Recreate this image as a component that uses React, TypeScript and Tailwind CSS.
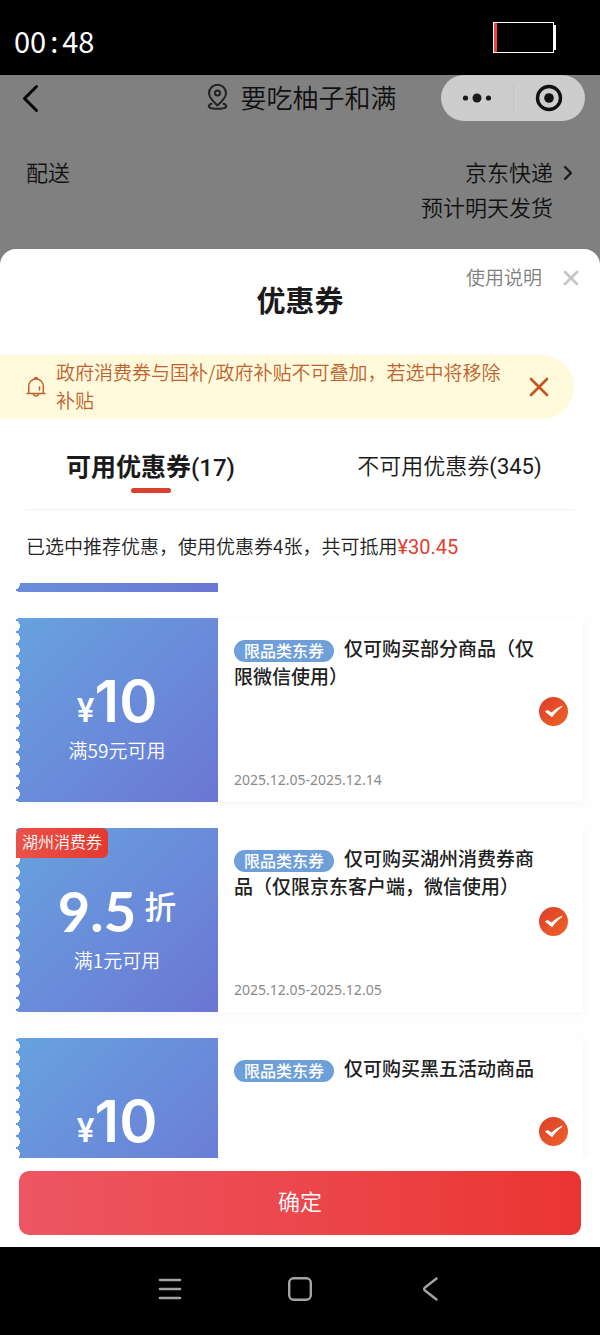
import { useState } from "react";

type Coupon = {
  id: string;
  amount: string;
  kind: "cash" | "discount";
  condition?: string;
  title: string;
  period?: string;
  tag?: string;
};

const coupons: Coupon[] = [
  {
    id: "wechat",
    amount: "10",
    kind: "cash",
    condition: "满59元可用",
    title: "仅可购买部分商品（仅限微信使用）",
    period: "2025.12.05-2025.12.14",
  },
  {
    id: "huzhou",
    amount: "9.5",
    kind: "discount",
    condition: "满1元可用",
    title: "仅可购买湖州消费券商品（仅限京东客户端，微信使用）",
    period: "2025.12.05-2025.12.05",
    tag: "湖州消费券",
  },
  {
    id: "friday",
    amount: "10",
    kind: "cash",
    title: "仅可购买黑五活动商品",
  },
];

function StatusBar() {
  return (
    <div className="flex h-[75px] shrink-0 items-center justify-between bg-black pr-11 pl-[14px] text-white">
      <div className="flex pt-1 text-[29px] leading-9 font-normal">
        <span>00</span>
        <span className="w-4 text-center">:</span>
        <span>48</span>
      </div>
      <svg width="63" height="31" viewBox="0 0 63 31" aria-hidden="true">
        <rect x="0.5" y="0.5" width="60" height="30" fill="none" stroke="#fff" />
        <rect x="1" y="1" width="3" height="29" fill="#ef4538" />
        <rect x="61" y="3" width="2" height="25" fill="#fff" />
      </svg>
    </div>
  );
}

function PageHeader() {
  return (
    <header className="grid h-[46px] shrink-0 grid-cols-[1fr_auto_1fr] items-center pl-1 text-[#101010]">
      <button aria-label="返回" className="ml-4 justify-self-start">
        <svg width="22" height="30" viewBox="0 0 22 30" fill="none">
          <path d="M16.5 3.5 4.5 15.5l12 12" stroke="#050505" strokeWidth="3" strokeLinecap="round" strokeLinejoin="round" />
        </svg>
      </button>
      <h1 className="flex items-center gap-3 pb-[2px] text-[26px] leading-9">
        <svg width="21" height="26" viewBox="0 0 21 26" fill="none" stroke="#222" strokeWidth="2" strokeLinecap="round">
          <path d="M10.5 21.5C6 17.5 2 13.5 2 9.3a8.500 8.500 0 0 1 17 0c0 4.200-4 8.200-8.500 12.200Z" strokeLinejoin="round" />
          <circle cx="10.500" cy="9" r="2.500" />
          <path d="M4.500 19.800c-5 1.800-3.500 5 6 5s11-3.200 6-5" />
        </svg>
        要吃柚子和满
      </h1>
      <div className="mr-[15px] flex h-[46px] w-36 items-center justify-self-end rounded-full bg-[#cdcdcd]">
        <button aria-label="更多" className="flex h-full flex-1 items-center justify-center">
          <svg width="30" height="10" viewBox="0 0 30 10" fill="#1b1b1b">
            <circle cx="3.500" cy="5" r="2.600" />
            <circle cx="15" cy="5" r="4.500" />
            <circle cx="26.500" cy="5" r="2.600" />
          </svg>
        </button>
        <span className="h-7 w-px bg-[#c3c3c3]" />
        <button aria-label="关闭" className="flex h-full flex-1 items-center justify-center">
          <svg width="28" height="28" viewBox="0 0 28 28" fill="none">
            <circle cx="14" cy="14" r="11.500" stroke="#111" strokeWidth="3.400" />
            <circle cx="14" cy="14" r="4.800" fill="#111" />
          </svg>
        </button>
      </div>
    </header>
  );
}

function Delivery() {
  return (
    <section className="flex shrink-0 justify-between px-[26px] pt-[33px] pb-[25px] text-[22px] leading-[35px] text-[#101010]">
      <span>配送</span>
      <div className="flex">
        <div className="text-right">
          <p>京东快递</p>
          <p>预计明天发货</p>
        </div>
        <svg className="mt-[11px] ml-2" width="13" height="16" viewBox="0 0 13 16" fill="none">
          <path d="m4 2 6 6-6 6" stroke="#1c1c1c" strokeWidth="2.4" strokeLinecap="round" strokeLinejoin="round" />
        </svg>
      </div>
    </section>
  );
}

function SheetHeader() {
  return (
    <div className="grid h-[106px] shrink-0 grid-cols-[1fr_auto_1fr] items-start">
      <h2 className="col-start-2 pt-[30px] text-[29px] leading-10 font-bold text-[#1a1a1a]">优惠券</h2>
      <div className="flex items-center gap-5 justify-self-end pt-4 pr-5">
        <a href="#help" className="text-[19px] leading-6 text-[#808080]">
          使用说明
        </a>
        <button aria-label="关闭优惠券" className="pt-[2px]">
          <svg width="18" height="18" viewBox="0 0 18 18" stroke="#c6c6c6" strokeWidth="2.800" strokeLinecap="round">
            <path d="m3 3 12 12M15 3 3 15" />
          </svg>
        </button>
      </div>
    </div>
  );
}

function Notice({ onClose }: { onClose: () => void }) {
  return (
    <div className="mr-[26px] flex shrink-0 items-center rounded-r-full bg-[#fefadb] pt-[3px] pb-[5px] pr-6 pl-[26px] text-[#c0622f]">
      <svg className="shrink-0" width="20" height="22" viewBox="0 0 20 22" fill="none" stroke="#c0622f" strokeWidth="1.500" strokeLinecap="round" strokeLinejoin="round">
        <path d="M1 18.500h18M2.700 18.500V11.500C2.700 7 6 4 10 4s7.300 3 7.300 7.500v7M8.500 3.500C8.700 2 11.300 2 11.500 3.500M7.500 19.500c.8 2 4.200 2 5 0M13.500 12v3" />
      </svg>
      <p className="ml-[10px] flex-1 text-[19px] leading-7">
        政府消费券与国补/政府补贴不可叠加，若选中将移除补贴
      </p>
      <button aria-label="关闭提示" className="ml-4 shrink-0" onClick={onClose}>
        <svg width="22" height="24" viewBox="0 0 22 24" stroke="#c65322" strokeWidth="2.600" strokeLinecap="round">
          <path d="m3 5 16 16M19 5 3 21" />
        </svg>
      </button>
    </div>
  );
}

function Check({ label }: { label: string }) {
  return (
    <span className="grid shrink-0 place-items-center">
      <input
        type="checkbox"
        defaultChecked
        aria-label={label}
        className="peer col-start-1 row-start-1 size-[29px] appearance-none rounded-full border border-gray-300 checked:border-0 checked:bg-linear-to-br checked:from-[#dc3c28] checked:to-[#ef6428]"
      />
      <svg className="pointer-events-none invisible z-10 col-start-1 row-start-1 peer-checked:visible" width="29" height="29" viewBox="0 0 29 29">
        <path d="M5.800 14.600 8.600 13l4 2.500c3-2.800 6-5 10.200-6.800l.6 1c-4 2.900-7.200 6.200-10.400 10.600Z" fill="#fff" />
      </svg>
    </span>
  );
}

function Stub() {
  return (
    <span className="col-start-1 row-start-1 bg-linear-135 from-[#67a2df] to-[#6b76d4] [mask:radial-gradient(circle_6px_at_-2px_6px,transparent_94%,#000)_0_2px/100%_12px]" />
  );
}

function CouponCard({ coupon }: { coupon: Coupon }) {
  return (
    <li className="relative flex h-[184px] shrink-0 rounded-sm bg-white shadow-[2px_2px_6px_rgba(0,0,0,0.03)]">
      <div className="grid w-[202px] shrink-0">
        <Stub />
        <div className="z-10 col-start-1 row-start-1 flex flex-col items-center pt-12 text-white">
          {coupon.kind === "cash" ? (
            <p className="flex items-baseline font-[Inter] font-semibold">
              <span className="text-[32px]">¥</span>
              <span className="text-[58px] leading-[70px]">{coupon.amount}</span>
            </p>
          ) : (
            <p className="flex items-center gap-2 font-bold">
              <span className="font-[Lato] text-[56px] leading-[70px]">{coupon.amount}</span>
              <span className="pb-3 text-[32px] leading-9 font-medium">折</span>
            </p>
          )}
          {coupon.condition && <p className="text-[19px] leading-7">{coupon.condition}</p>}
        </div>
      </div>
      {coupon.tag && (
        <span className="absolute top-0 left-0 z-20 rounded-t-md rounded-br-md bg-linear-to-r from-[#ea5148] to-[#e5392f] px-[6px] pb-[3px] text-base leading-[27px] text-white">
          {coupon.tag}
        </span>
      )}
      <div className="flex flex-1 items-center pt-[2px] pr-[15px] pl-4">
        <div className="flex flex-1 flex-col justify-between self-stretch pt-[14px] pb-[10px]">
          <h3 className="text-[19px] leading-7 font-medium text-[#202020]">
            <span className="mr-[10px] inline-block rounded-full bg-[#6f9fd9] px-[10px] pb-[2px] align-middle text-base leading-5 text-white">
              限品类东券
            </span>
            {coupon.title}
          </h3>
          {coupon.period && (
            <time className="font-['Noto_Sans'] text-sm leading-6 font-normal text-[#8a8a8a]">{coupon.period}</time>
          )}
        </div>
        <Check label={coupon.title} />
      </div>
    </li>
  );
}

function SystemNav() {
  return (
    <nav className="flex h-[88px] shrink-0 items-center justify-center gap-[102px] bg-black pb-1">
      <button aria-label="最近任务">
        <svg width="28" height="28" viewBox="0 0 28 28" stroke="#a3a3a3" strokeWidth="2.600" strokeLinecap="round">
          <path d="M4 5h20M4 14h20M4 23h20" />
        </svg>
      </button>
      <button aria-label="主屏幕">
        <svg width="28" height="28" viewBox="0 0 28 28" fill="none" stroke="#a3a3a3" strokeWidth="2.400">
          <rect x="3.200" y="3.200" width="21.600" height="21.600" rx="4.500" />
        </svg>
      </button>
      <button aria-label="返回上一页">
        <svg width="28" height="28" viewBox="0 0 28 28" fill="none" stroke="#a3a3a3" strokeWidth="2.400" strokeLinecap="round">
          <path d="M20.500 3.500 9 12.500q-1.800 1.500 0 3l11.500 9" />
        </svg>
      </button>
    </nav>
  );
}

export default function App() {
  const [tab, setTab] = useState("usable");
  const [notice, setNotice] = useState(true);

  const tabs = [
    { key: "usable", label: "可用优惠券", count: 17 },
    { key: "unusable", label: "不可用优惠券", count: 345 },
  ];

  return (
    <div className="flex h-screen flex-col bg-[#808080] font-['Noto_Sans_CJK_SC',sans-serif] font-[350]">
      <StatusBar />
      <PageHeader />
      <Delivery />
      <main className="flex min-h-0 flex-1 flex-col rounded-t-2xl bg-white">
        <SheetHeader />
        {notice && <Notice onClose={() => setNotice(false)} />}
        <div className="mx-[26px] flex shrink-0 border-b border-[#f2f2f2] pt-[27px] text-[#1a1a1a]">
          {tabs.map((item) => (
            <button
              key={item.key}
              onClick={() => setTab(item.key)}
              className={
                tab === item.key
                  ? "flex h-[63px] flex-1 flex-col items-center gap-[3px] text-[25px] leading-[39px] font-bold"
                  : "flex h-[63px] flex-1 flex-col items-center pl-[50px] text-[22px] leading-[37px]"
              }
            >
              <span>
                {item.label}
                <span className={tab === item.key ? "font-[Roboto] text-2xl font-medium" : "font-[Roboto] font-normal"}>
                  ({item.count})
                </span>
              </span>
              {tab === item.key && <span className="h-[5px] w-10 rounded-full bg-[#d9402f]" />}
            </button>
          ))}
        </div>
        <p className="shrink-0 px-[26px] pt-[22px] pb-[22px] text-[19px] leading-7 text-[#222]">
          已选中推荐优惠，使用优惠券4张，共可抵用
          <span className="font-[Roboto] text-xl leading-7 font-normal text-[#e0402f]">¥30.45</span>
        </p>
        <ul className="flex min-h-0 flex-1 flex-col gap-[26px] overflow-hidden bg-[#fefefe] pr-[17px] pl-4">
          <li className="flex h-[9px] shrink-0 items-end overflow-hidden bg-white">
            <div className="grid h-[184px] w-[202px] shrink-0">
              <Stub />
            </div>
          </li>
          {coupons.map((coupon) => (
            <CouponCard key={coupon.id} coupon={coupon} />
          ))}
        </ul>
        <div className="shrink-0 bg-white px-[19px] pt-[13px] pb-3">
          <button className="h-16 w-full rounded-[10px] bg-linear-to-r from-[#ed5662] to-[#ea3431] pb-[5px] text-[22px] text-white">
            确定
          </button>
        </div>
      </main>
      <SystemNav />
    </div>
  );
}
